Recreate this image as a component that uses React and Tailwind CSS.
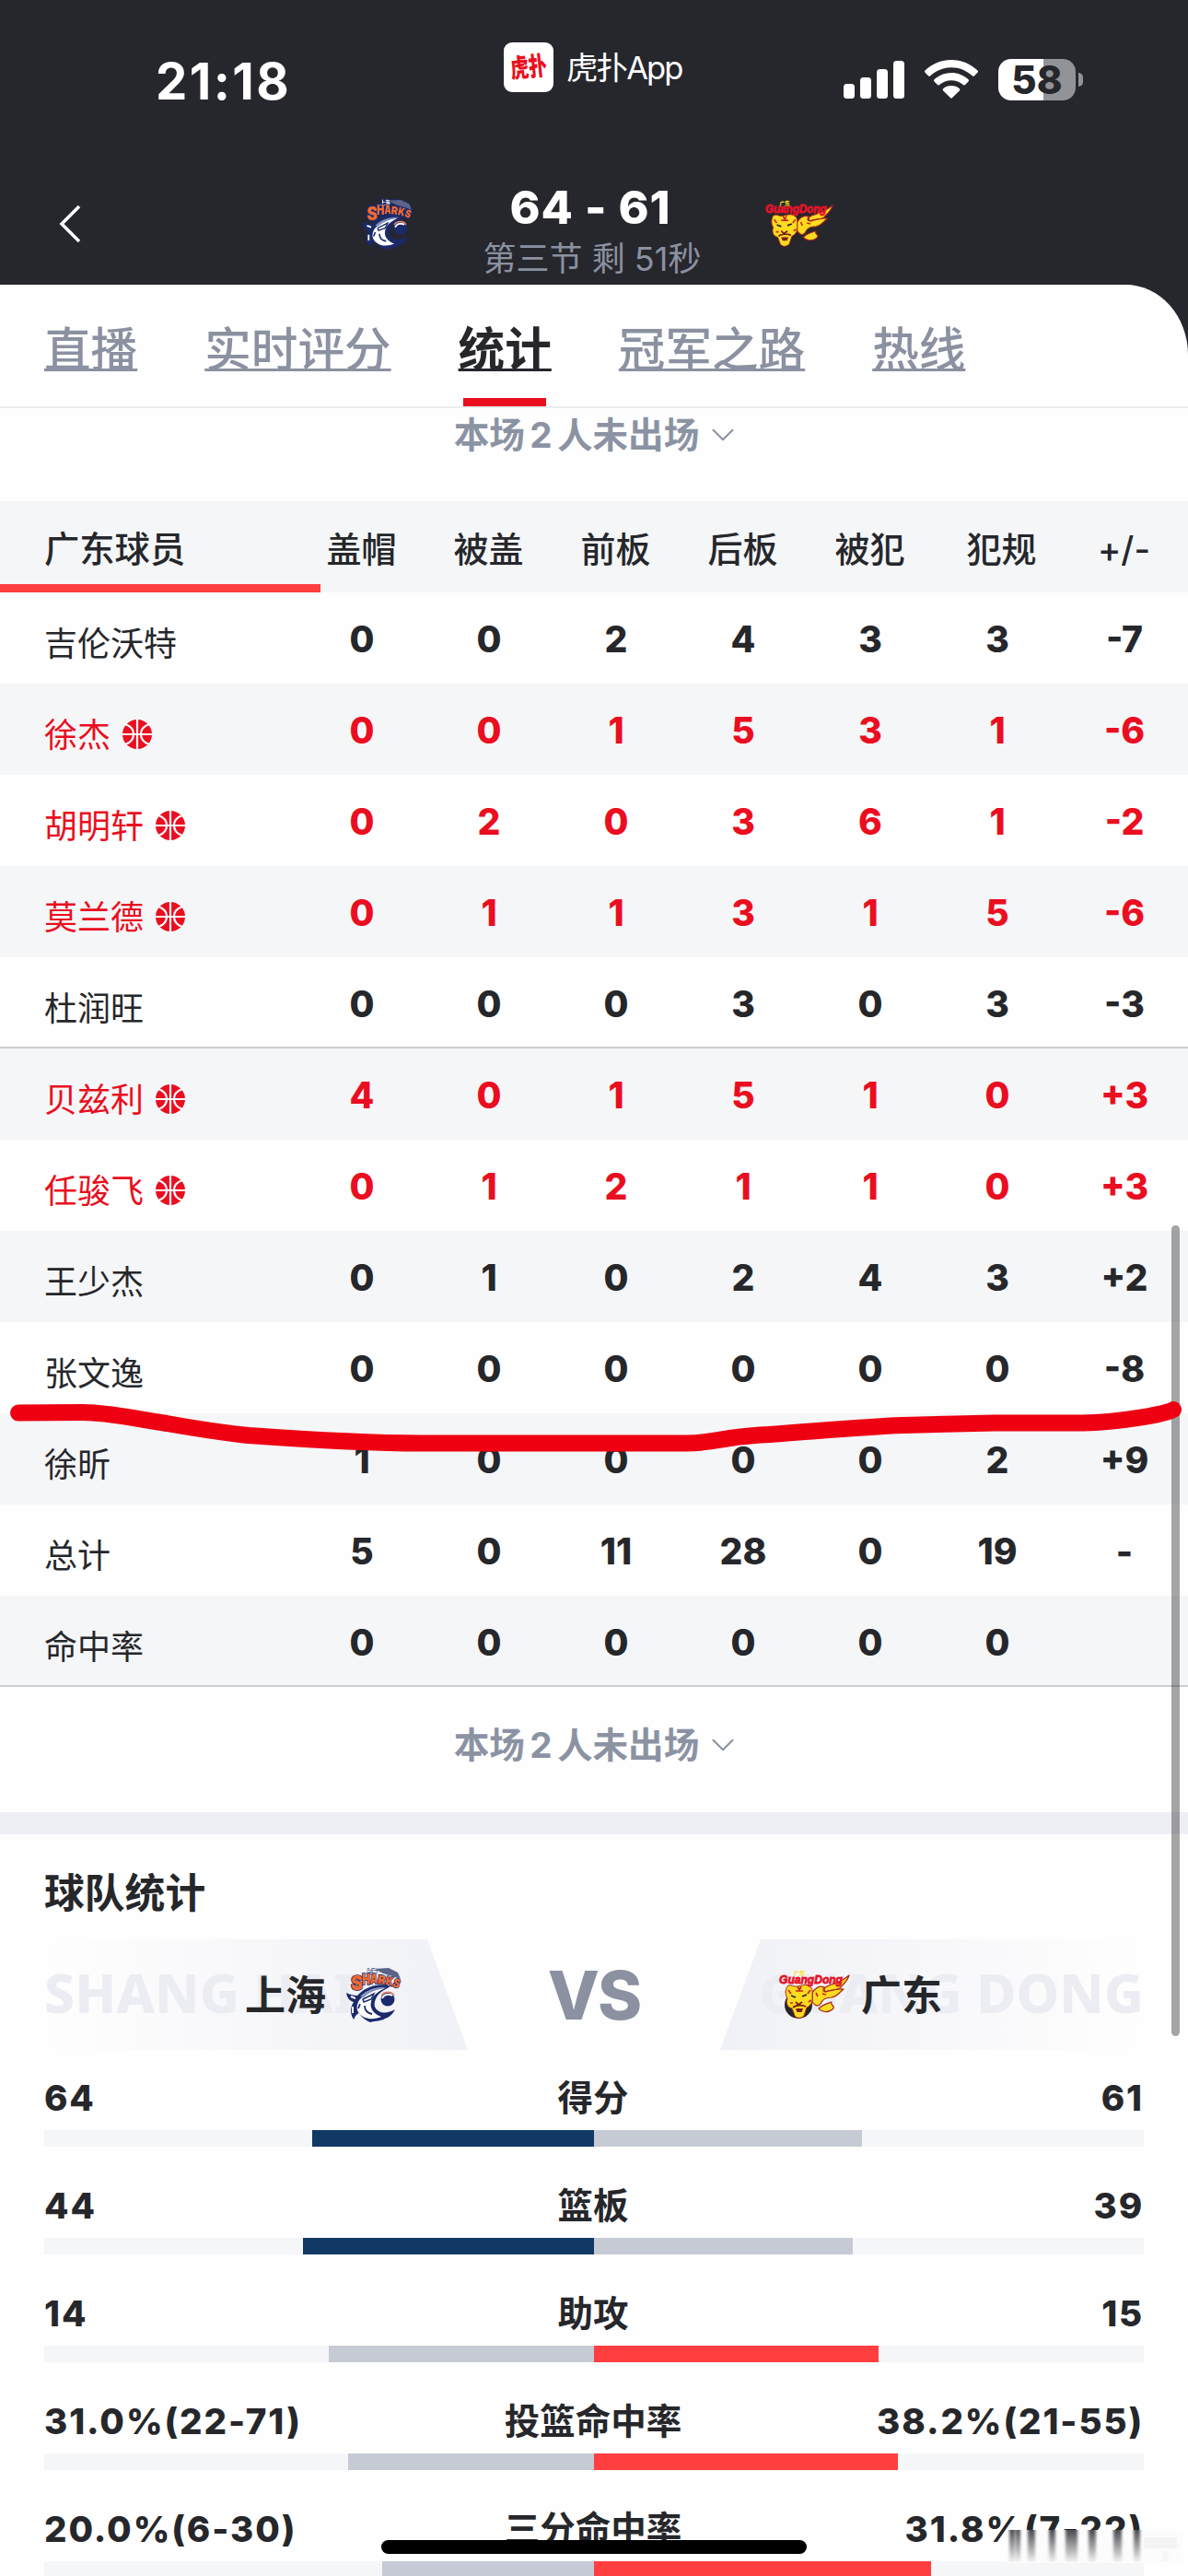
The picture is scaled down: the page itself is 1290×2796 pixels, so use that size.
import { ChevronDown } from 'lucide-react';

const tabs = ['直播', '实时评分', '统计', '冠军之路', '热线'];
const columns = ['盖帽', '被盖', '前板', '后板', '被犯', '犯规', '+/-'];

const players = [
  { name: '吉伦沃特', stats: ['0', '0', '2', '4', '3', '3', '-7'] },
  { name: '徐杰', onCourt: true, stats: ['0', '0', '1', '5', '3', '1', '-6'] },
  { name: '胡明轩', onCourt: true, stats: ['0', '2', '0', '3', '6', '1', '-2'] },
  { name: '莫兰德', onCourt: true, stats: ['0', '1', '1', '3', '1', '5', '-6'] },
  { name: '杜润旺', divider: true, stats: ['0', '0', '0', '3', '0', '3', '-3'] },
  { name: '贝兹利', onCourt: true, stats: ['4', '0', '1', '5', '1', '0', '+3'] },
  { name: '任骏飞', onCourt: true, stats: ['0', '1', '2', '1', '1', '0', '+3'] },
  { name: '王少杰', stats: ['0', '1', '0', '2', '4', '3', '+2'] },
  { name: '张文逸', stats: ['0', '0', '0', '0', '0', '0', '-8'] },
  { name: '徐昕', stats: ['1', '0', '0', '0', '0', '2', '+9'] },
  { name: '总计', stats: ['5', '0', '11', '28', '0', '19', '-'] },
  { name: '命中率', divider: true, stats: ['0', '0', '0', '0', '0', '0', ''] },
];

const teamStats = [
  { label: '得分', home: '64', away: '61', h: 64, a: 61 },
  { label: '篮板', home: '44', away: '39', h: 44, a: 39 },
  { label: '助攻', home: '14', away: '15', h: 14, a: 15 },
  { label: '投篮命中率', home: '31.0%(22-71)', away: '38.2%(21-55)', h: 31, a: 38.2 },
  { label: '三分命中率', home: '20.0%(6-30)', away: '31.8%(7-22)', h: 20, a: 31.8 },
];

const Basketball = () => (
  <svg viewBox="0 0 32 32" className="w-8 h-8 ml-[13px] -mt-px shrink-0">
    <circle cx="16" cy="16" r="16" fill="#ea0e20" />
    <g className="stroke-white" strokeWidth="2.2" fill="none">
      <path d="M16 0V32M0 16H32" />
      <path d="M3 5C9 7 12 11 12 16S9 25 3 27" />
      <path d="M29 5C23 7 20 11 20 16S23 25 29 27" />
    </g>
  </svg>
);

const SharksLogo = ({ className }) => (
  <svg viewBox="0 0 60 60" className={className}>
    <path d="M30 2L46 1L56 6L59 13L50 10L40 7Z" fill="#5a6488" />
    <text x="21" y="6.500" fill="#fff" stroke="#1b2a6b" strokeWidth="1" paintOrder="stroke" fontFamily="Noto Sans CJK SC" fontWeight="900" fontSize="6">上海</text>
    <path d="M48 21C38 17 22 20 12 31C8 31 4 30 0 28C1 34 4 37 8 38C4 44 4 51 8 57C10 53 11 51 14 50C17 55 20 57 26 60C32 58 38 59 42 56C48 54 51 50 53 46C46 50 39 51 34 47C29 43 30 37 34 31C38 26 43 24 48 21Z" fill="#1b2a6b" />
    <path d="M42 23C31 24 20 29 14 36C10 43 11 49 17 53C22 57 31 57 38 54C30 51 25 45 27 38C28 31 34 27 42 23Z" fill="#fff" />
    <path d="M15 32C22 25 32 21 44 22C34 24 25 27 19 33Z" fill="#8593bd" />
    <path d="M18 35L30 29L27 35L19 38Z" fill="#fff" stroke="#1b2a6b" strokeWidth="1.5" />
    <path d="M20 42C20 47 23 50 28 51M15 40L13 45" fill="none" stroke="#1b2a6b" strokeWidth="1.8" />
    <path d="M5 32L10 34M7 43L7 50" stroke="#fff" strokeWidth="2" />
    <circle cx="45" cy="35" r="7.500" fill="#1b2a6b" />
    <path d="M38 31C41 26 50 26 52 31" fill="none" stroke="#e68a62" strokeWidth="1.6" />
    <path d="M39 34C41 29 47 29 50 31" fill="none" stroke="#fff" strokeWidth="2" />
    <g fill="#f26a2e" stroke="#1b2a6b" strokeWidth="1.6" paintOrder="stroke" fontFamily="Inter" fontWeight="900">
      <text x="5" y="25" fontSize="22" textLength="13" lengthAdjust="spacingAndGlyphs">S</text>
      <text x="17" y="19" fontSize="16" textLength="9" lengthAdjust="spacingAndGlyphs">H</text>
      <text x="26" y="18" fontSize="14" textLength="8" lengthAdjust="spacingAndGlyphs">A</text>
      <text x="34" y="18" fontSize="13" textLength="8" lengthAdjust="spacingAndGlyphs" transform="rotate(6 34 18)">R</text>
      <text x="42" y="19" fontSize="13" textLength="8" lengthAdjust="spacingAndGlyphs" transform="rotate(12 42 19)">K</text>
      <text x="50" y="21" fontSize="13" textLength="7" lengthAdjust="spacingAndGlyphs" transform="rotate(18 50 21)">S</text>
    </g>
  </svg>
);

const TigersLogo = ({ className }) => (
  <svg viewBox="0 0 78 54" className={className}>
    <text x="16" y="6" fontFamily="Noto Sans CJK SC" fontSize="6" fontWeight="900" fill="#f5e11a">广东</text>
    <circle cx="21" cy="38" r="15" fill="#24252a" />
    {/* Flames */}
    <g fill="#fddb20" stroke="#a3261c" strokeWidth="1.2" strokeLinejoin="round">
      <path d="M49 20C54 15 63 17 76 6C74 13 69 16 66 20C60 23 56 21 50 24Z" />
      <path d="M36 25C40 19 45 17 49 19C46 23 49 25 54 23C60 22 65 20 70 21C65 25 63 29 57 30C50 30 47 32 45 37C42 41 38 38 36 35Z" />
      <path d="M43 42C47 38 51 37 57 35C55 39 62 39 58 43C53 47 46 46 43 42Z" />
    </g>
    {/* Face */}
    <path d="M9 18C12 15 16 19 20 18C25 17 29 15 33 18C37 20 36 25 36 30C37 35 34 39 30 41L27 50C24 53 19 53 17 50L14 42C9 41 7 36 9 31C6 26 7 21 9 18Z" fill="#fddb20" stroke="#a3261c" strokeWidth="1" />
    <path d="M20 18L22 22L24 18M18 23H26M10 22L13 26M34 22L31 26M12 36H15M32 35L35 33M40 25L42 29M47 26L51 27" fill="none" stroke="#c8281c" strokeWidth="1.7" />
    <path d="M13 28L18 30M30 27L25 29" stroke="#26272b" strokeWidth="1.8" />
    <path d="M18 35L21 38L25 35M15 41C18 38 26 38 29 40" fill="none" stroke="#7a1d14" strokeWidth="1.8" />
    <path d="M18 42H26L24.500 46H19.500Z" fill="#7a1d14" />
    <text x="0" y="15" fontFamily="Liberation Sans" fontStyle="italic" fontWeight="700" fontSize="13.5" textLength="69" lengthAdjust="spacingAndGlyphs" fill="#e5142a" stroke="#e5142a" strokeWidth=".9">GuangDong</text>
  </svg>
);

const StatusBar = () => (
  <div className="h-[170px] flex items-start text-white">
    <div className="w-[547px] pt-[61px] pl-[169px] text-[54.500px] leading-[54px] font-bold tracking-[2.400px]">21:18</div>
    <div className="w-[369px] pt-[45px] flex items-center">
      <div className="w-[54px] h-[54px] rounded-[9px] bg-white text-[#ea0e20] font-black text-[20px] leading-[54px] flex justify-center">
        <span className="-rotate-6 scale-y-140">虎扑</span>
      </div>
      <span className="ml-[14px] pt-[2px] text-[34.500px] leading-[54px] tracking-[-1.900px]">虎扑App</span>
    </div>
    <svg viewBox="0 0 66 42" className="w-[66px] h-[42px] mt-[66px]" fill="#fff">
      <rect x="0" y="25" width="12" height="16" rx="3.5" />
      <rect x="18" y="18" width="12" height="23" rx="3.5" />
      <rect x="36" y="9" width="12" height="32" rx="3.5" />
      <rect x="54" y="0" width="12" height="41" rx="3.5" />
    </svg>
    <svg viewBox="0 0 58 42" className="w-[58px] h-[42px] mt-[65px] ml-[22px]" fill="#fff">
      <path d="M29 0C40 0 50 4.300 57.500 11.500C58.200 12.200 58.200 13 57.500 13.700L54 17.200C53.300 17.900 52.500 17.900 51.800 17.200C45.500 11.500 37.500 8.200 29 8.200S12.500 11.500 6.200 17.200C5.500 17.900 4.700 17.900 4 17.200L.5 13.700C-.2 13-.2 12.200 .5 11.500C8 4.300 18 0 29 0Z" />
      <path d="M29 14C36 14 42.500 16.700 47.500 21.200C48.200 21.900 48.200 22.700 47.500 23.400L44 26.900C43.300 27.600 42.500 27.600 41.800 27C38.300 24 33.800 22.200 29 22.200S19.700 24 16.200 27C15.500 27.600 14.700 27.600 14 26.900L10.500 23.400C9.800 22.700 9.800 21.900 10.500 21.200C15.500 16.700 22 14 29 14Z" />
      <path d="M29 28C32.500 28 35.500 29.200 37.800 31.200C38.500 31.900 38.500 32.700 37.800 33.400L30.100 41.100C29.400 41.800 28.600 41.800 27.900 41.100L20.200 33.400C19.500 32.700 19.500 31.900 20.200 31.200C22.500 29.200 25.500 28 29 28Z" />
    </svg>
    <div className="ml-[22px] mt-[64px] flex items-center">
      <div className="w-[84px] h-[45px] rounded-[14px] bg-linear-to-r from-white from-58% to-[#929396] to-58% text-center text-[42px] leading-[45px] font-extrabold text-[#26272c]">58</div>
      <div className="ml-[3px] w-[5px] h-[15px] rounded-r-full bg-[#929396]" />
    </div>
  </div>
);

const GameHeader = () => (
  <div className="h-[139px] flex items-start">
    <svg viewBox="0 0 24 42" className="w-6 h-[42px] ml-[64px] mt-[52px]" fill="none" stroke="#fff" strokeWidth="3.500">
      <path d="M22 2L3 21L22 40" />
    </svg>
    <SharksLogo className="w-[54px] h-[54px] mt-[46px] ml-[306px] drop-shadow-[0_0_1px_#1b2a9b]" />
    <div className="w-[390px] pt-[30px] text-center">
      <div className="pr-[4px] text-[50px] leading-[50px] font-extrabold tracking-[1px] text-white">64 - 61</div>
      <div className="mt-[13px] text-[36px] leading-[36px] text-[#8b91a1] whitespace-nowrap">第三节 剩 51秒</div>
    </div>
    <TigersLogo className="w-[75px] h-[52px] mt-[47px] -ml-[7px]" />
  </div>
);

const BenchNote = ({ className }) => (
  <div className={`flex items-center justify-center text-[#8b93a3] ${className}`}>
    <span className="text-[38.600px] leading-[40px] font-bold [word-spacing:-3.800px]">本场 2 人未出场</span>
    <ChevronDown className="w-[42px] h-[42px] ml-[5px] -mr-[9px]" strokeWidth={1.2} />
  </div>
);

const PlayerRow = ({ player, striped }) => (
  <div className={`h-[99px] flex ${striped ? 'bg-[#f5f6f8]' : ''} ${player.onCourt ? 'text-[#ea0e20]' : 'text-[#26272b]'} ${player.divider ? 'border-b-2 border-[#cbccd1]' : ''}`}>
    <div className="w-[324px] h-[99px] pl-12 pt-[12px] flex items-center text-[36px]">
      {player.name}
      {player.onCourt && <Basketball />}
    </div>
    {player.stats.map((value, i) => (
      <div key={i} className="w-[138px] h-[99px] pt-[4px] flex items-center justify-center text-[39px] font-extrabold">{value}</div>
    ))}
  </div>
);

const TeamStatRow = ({ stat }) => {
  const total = stat.h + stat.a;
  return (
    <div className="h-[117px] px-12">
      <div className="h-[72px] pt-[2px] flex items-center text-[38.500px] leading-[40px] font-bold text-[#26272b] whitespace-nowrap">
        <span className="flex-1 font-extrabold tracking-[1.900px]">{stat.home}</span>
        <span className="pr-[2px] text-center">{stat.label}</span>
        <span className="flex-1 text-right font-extrabold tracking-[1.900px]">{stat.away}</span>
      </div>
      <div className="h-[18px] flex bg-[#f5f6f8]">
        <div className="w-1/2 flex justify-end">
          <div className={stat.h > stat.a ? 'bg-[#103965]' : 'bg-[#c6cad5]'} style={{ width: `${(stat.h / total) * 100}%` }} />
        </div>
        <div className="w-1/2 flex">
          <div className={stat.a > stat.h ? 'bg-[#ff3e40]' : 'bg-[#c6cad5]'} style={{ width: `${(stat.a / total) * 100}%` }} />
        </div>
      </div>
    </div>
  );
};

const streaks = [[2, 6], [9, 5], [22, 8], [45, 7], [63, 13], [88, 8], [115, 9], [137, 7]];

export default function App() {
  return (
    <div className="relative w-[1290px] h-[2796px] overflow-hidden bg-[#26272c] font-['Inter','Noto_Sans_CJK_SC',sans-serif]">
      <StatusBar />
      <GameHeader />

      <main className="h-[2487px] bg-[#fefefe] rounded-tr-[68px_76px]">
        {/* Tabs */}
        <nav className="h-[134px] pl-[48px] flex items-start gap-[73px] border-b-2 border-[#ebecee]">
          {tabs.map((tab) => (
            <div key={tab} className="h-[132px] pt-[46px] flex flex-col items-center justify-between">
              <span className={`text-[50.600px] leading-[50px] underline decoration-[3px] underline-offset-[2px] ${tab === '统计' ? 'font-bold text-[#26272b]' : 'font-medium text-[#8b91a1]'}`}>{tab}</span>
              {tab === '统计' && <div className="w-[90px] h-[9px] bg-[#ea0e20]" />}
            </div>
          ))}
        </nav>

        <BenchNote className="h-[101px] pb-[43px]" />

        {/* Player table */}
        <div className="h-[99px] bg-[#f5f6f8] flex text-[38px] font-medium text-[#26272b]">
          <div className="w-[348px] h-[99px] pl-12 flex items-center border-b-[9px] border-[#ff3e40]">
            <span className="pt-[15px] text-[38.300px]">广东球员</span>
          </div>
          <div className="flex -ml-6 pt-[5px]">
            {columns.map((col) => (
              <div key={col} className={`w-[138px] pr-px flex items-center justify-center ${col === '犯规' ? 'pl-[10px]' : ''}`}>{col}</div>
            ))}
          </div>
        </div>
        {players.map((player, i) => (
          <PlayerRow key={player.name} player={player} striped={i % 2 === 1} />
        ))}

        <BenchNote className="h-[136px] pb-[10px]" />
        <div className="h-6 bg-[#eeeff4]" />

        {/* Team comparison */}
        <h2 className="h-[114px] pt-[43px] pl-12 text-[43.800px] leading-[44px] font-bold text-[#26272b]">球队统计</h2>
        <div className="h-[120px] flex justify-between">
          <div className="relative w-[508px] flex items-center justify-end pr-[72px] bg-linear-to-r from-transparent from-10% to-[#f0f1f6] [clip-path:polygon(0_0,464px_0,100%_100%,0_100%)]">
            <span className="absolute left-12 top-[27px] font-['Noto_Sans'] text-[59px] leading-[60px] font-extrabold text-[#ecedf3] whitespace-nowrap">SHANG HAI</span>
            <span className="relative pt-[2px] text-[44px] font-bold text-[#26272b]">上海</span>
            <SharksLogo className="relative w-[60px] h-[60px] ml-[22px]" />
          </div>
          <div className="pt-[23px] text-[73px] leading-[75px] font-extrabold tracking-[-2px] text-[#8b91a1]">VS</div>
          <div className="relative w-[508px] flex items-center pl-[64px] bg-linear-to-l from-transparent from-10% to-[#f0f1f6] [clip-path:polygon(44px_0,100%_0,100%_100%,0_100%)]">
            <span className="absolute right-12 top-[27px] font-['Noto_Sans'] text-[59px] leading-[60px] font-extrabold text-[#ecedf3] whitespace-nowrap">GUANG DONG</span>
            <TigersLogo className="relative w-[78px] h-[54px]" />
            <span className="relative ml-[11px] pt-[2px] text-[44px] font-bold text-[#26272b]">广东</span>
          </div>
        </div>
        <div className="pt-[15px]">
          {teamStats.map((stat) => (
            <TeamStatRow key={stat.label} stat={stat} />
          ))}
        </div>
      </main>

      {/* Scroll indicator */}
      <div className="absolute left-[1272px] top-[1330px] w-[9px] h-[880px] rounded-full bg-black/35" />

      {/* Hand-drawn marker line */}
      <svg viewBox="0 0 1290 80" className="absolute left-0 top-[1505px] w-[1290px] h-20" fill="none" stroke="#ee0012" strokeWidth="18" strokeLinecap="round" strokeLinejoin="round">
        <path d="M20 28.500L90 28C118 28 140 34 181 40C215 46 240 50 270 53C340 58 410 61.500 457 61.500H745C775 61.500 785 55 820 53C870 50 930 44 980 42L1080 39.500H1176C1215 39 1265 30 1274 25" />
      </svg>

      {/* Faded watermark over the last value */}
      <svg viewBox="0 0 196 36" className="absolute left-[1094px] top-[2746px] w-[196px] h-9">
        <defs>
          <linearGradient id="fade" x1="0" y1="0" x2="0" y2="1">
            <stop offset="0" stopColor="#4a4b50" />
            <stop offset="1" stopColor="#4a4b50" stopOpacity="0.05" />
          </linearGradient>
          <filter id="soft"><feGaussianBlur stdDeviation="1.5 0.3" /></filter>
        </defs>
        <rect width="190" height="36" fill="#fcfcfd" />
        <g filter="url(#soft)">
          {streaks.map(([x, w]) => <rect key={x} x={x} y="0" width={w} height="35" fill="url(#fade)" />)}
          <rect x="148" y="8" width="36" height="12" fill="#f3f3f4" />
          <rect x="168" y="22" width="6" height="12" fill="#f4f4f5" />
        </g>
      </svg>

      {/* Home indicator */}
      <div className="absolute left-[414px] top-[2757px] w-[462px] h-[15px] rounded-full bg-black" />
    </div>
  );
}
